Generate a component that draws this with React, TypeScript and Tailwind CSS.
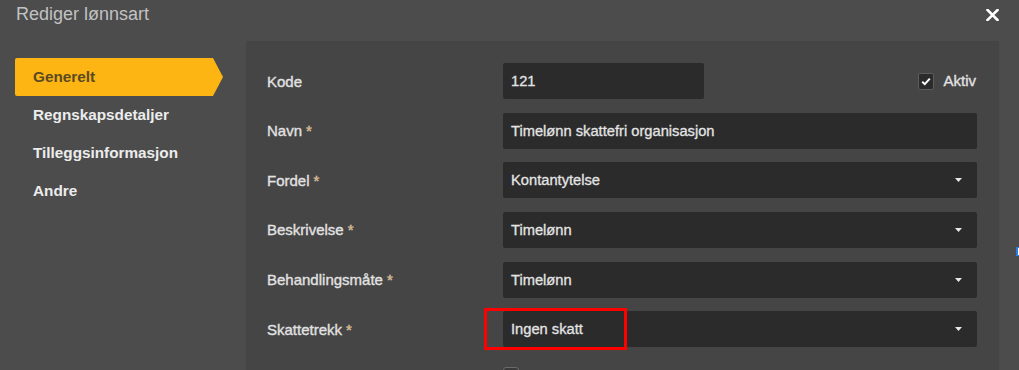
import React from "react";

const Caret = () => (
  <svg width="7" height="4" viewBox="0 0 7 4" className="shrink-0">
    <path d="M0 0 L7 0 L3.5 4 Z" fill="#e8e8e8" />
  </svg>
);

const Req = () => <span className="text-[#d98b1f] ml-[4px]">*</span>;

function Row({
  label,
  required,
  children,
}: {
  label: string;
  required?: boolean;
  children: React.ReactNode;
}) {
  return (
    <div className="flex items-center h-[36px] mb-[13.66px]">
      <div className="w-[236px] shrink-0 text-[15px] text-[#e2e2e2] leading-none [-webkit-text-stroke:0.35px_#e2e2e2]">
        {label}
        {required && <Req />}
      </div>
      <div className="flex-1 flex items-center">{children}</div>
    </div>
  );
}

function Select({ value }: { value: string }) {
  return (
    <div className="flex-1 h-[36px] bg-[#2b2b2b] rounded-[2px] flex items-center justify-between pl-[8px] pr-[15px] text-[14.7px] text-[#e4e4e4] [-webkit-text-stroke:0.3px_#e4e4e4]">
      <span>{value}</span>
      <Caret />
    </div>
  );
}

export default function App() {
  const nav = ["Generelt", "Regnskapsdetaljer", "Tilleggsinformasjon", "Andre"];
  return (
    <div className="relative w-[1019px] h-[370px] overflow-hidden bg-[#4c4c4c] font-['Liberation_Sans',Arial,sans-serif]">
      <div className="h-[41px] flex items-start justify-between pl-[16px] pr-[20px] pt-[5px]">
        <span className="text-[18px] leading-[18px] text-[#c2c2c2]">Rediger lønnsart</span>
        <svg width="13" height="12" viewBox="0 0 13 12" className="mt-[4px]">
          <path d="M1.5 1 L11.5 11 M11.5 1 L1.5 11" stroke="#ffffff" strokeWidth="2.6" strokeLinecap="square" />
        </svg>
      </div>
      <div className="flex">
        <nav className="w-[246px] shrink-0 pl-[15px] pt-[17px]">
          {nav.map((n, i) =>
            i === 0 ? (
              <div
                key={n}
                className="w-[208px] h-[38px] flex items-center pl-[18px] bg-[#fdb514] rounded-l-[2px] text-[15.3px] font-bold text-[#5b4a22] [clip-path:polygon(0_0,calc(100%-10px)_0,100%_50%,calc(100%-10px)_100%,0_100%)]"
              >
                {n}
              </div>
            ) : (
              <div key={n} className="h-[38px] flex items-center pl-[18px] text-[15.3px] font-bold text-[#ececec]">
                {n}
              </div>
            )
          )}
        </nav>
        <div className="w-[753px] h-[329px] bg-[#454545] pt-[22px] pl-[21px] pr-[22px]">
          <Row label="Kode">
            <div className="w-[201px] h-[36px] bg-[#2b2b2b] rounded-[2px] flex items-center pl-[8px] text-[14.7px] text-[#e4e4e4] [-webkit-text-stroke:0.3px_#e4e4e4]">
              121
            </div>
            <div className="flex-1" />
            <div className="flex items-center mr-[1px]">
              <div className="w-[16px] h-[17px] bg-[#2b2b2b] border border-[#5c5c5c] rounded-[2px] flex items-center justify-center">
                <svg width="10" height="9" viewBox="0 0 10 9">
                  <path d="M1.2 4.8 L3.8 7.2 L8.8 1.6" stroke="#ffffff" strokeWidth="2" fill="none" />
                </svg>
              </div>
              <span className="ml-[9px] text-[15px] text-[#e2e2e2] [-webkit-text-stroke:0.35px_#e2e2e2]">Aktiv</span>
            </div>
          </Row>
          <Row label="Navn" required>
            <div className="flex-1 h-[36px] bg-[#2b2b2b] rounded-[2px] flex items-center pl-[8px] text-[14.7px] text-[#e4e4e4] [-webkit-text-stroke:0.3px_#e4e4e4]">
              Timelønn skattefri organisasjon
            </div>
          </Row>
          <Row label="Fordel" required>
            <Select value="Kontantytelse" />
          </Row>
          <Row label="Beskrivelse" required>
            <Select value="Timelønn" />
          </Row>
          <Row label="Behandlingsmåte" required>
            <Select value="Timelønn" />
          </Row>
          <Row label="Skattetrekk" required>
            <Select value="Ingen skatt" />
          </Row>
          <div className="flex h-[36px]">
            <div className="w-[236px] shrink-0" />
            <div className="mt-[6px] w-[16px] h-[16px] bg-[#3a3a3a] border border-[#6a6a6a] rounded-[3px]" />
          </div>
        </div>
      </div>
      <div className="absolute left-[484px] top-[308px] w-[143px] h-[42px] border-[3px] border-[#ff0000]" />
      <div className="absolute left-[1016px] top-[247px] w-[3px] h-[9px] border-l-2 border-y border-[#2a7de1] bg-white" />
    </div>
  );
}
